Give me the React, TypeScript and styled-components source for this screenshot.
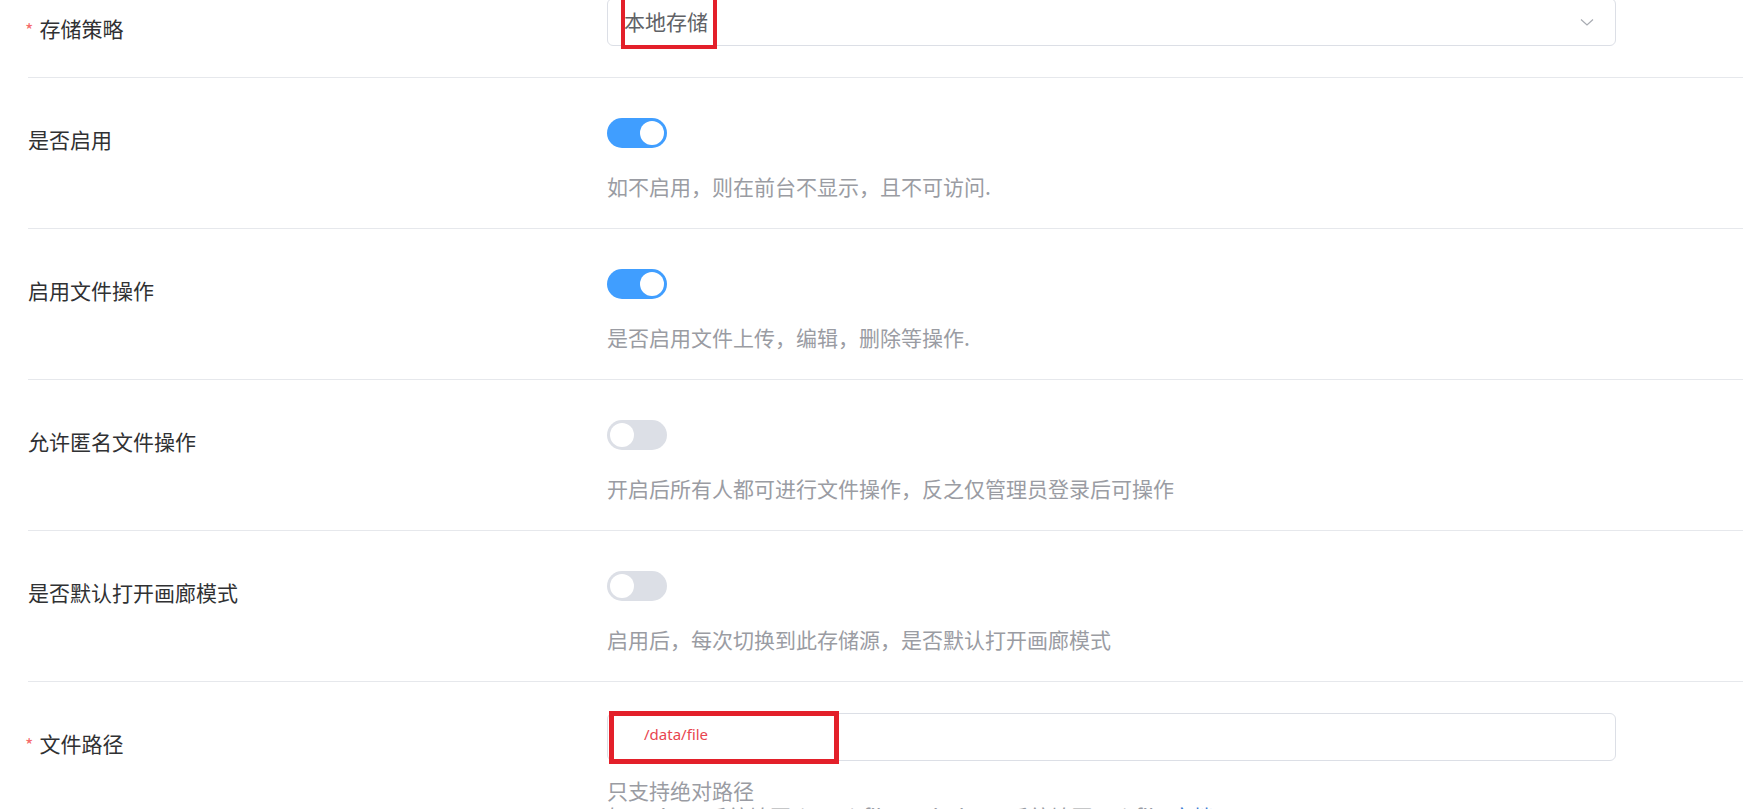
import styled, { createGlobalStyle } from "styled-components";

const GlobalStyle = createGlobalStyle`
  html, body {
    margin: 0;
    padding: 0;
    background: #ffffff;
    overflow: hidden;
  }
  body {
    font-family: "Noto Sans CJK SC", "Noto Sans", sans-serif;
  }
`;

const colors = {
  label: "#303133",
  value: "#606266",
  hint: "#9a9ca3",
  line: "#e6e8ec",
  border: "#dcdfe6",
  blue: "#409eff",
  off: "#dcdfe6",
  star: "#f56c6c",
  mark: "#e3202a",
};

interface RowData {
  label: string;
  hint: string;
  on: boolean;
}

const switchRows: RowData[] = [
  { label: "是否启用", hint: "如不启用，则在前台不显示，且不可访问.", on: true },
  { label: "启用文件操作", hint: "是否启用文件上传，编辑，删除等操作.", on: true },
  {
    label: "允许匿名文件操作",
    hint: "开启后所有人都可进行文件操作，反之仅管理员登录后可操作",
    on: false,
  },
  {
    label: "是否默认打开画廊模式",
    hint: "启用后，每次切换到此存储源，是否默认打开画廊模式",
    on: false,
  },
];

export default function App() {
  return (
    <Page>
      <GlobalStyle />
      <Form>
        <FirstRow>
          <Label $required>存储策略</Label>
          <Field>
            <Select>
              <SelectValue>本地存储</SelectValue>
              <Chevron viewBox="0 0 16 16">
                <path d="M2 5.5 L8 11 L14 5.5" />
              </Chevron>
              <MarkBox $left={13} $top={-4} $width={96} $height={54} $thick={4} />
            </Select>
          </Field>
        </FirstRow>

        {switchRows.map((row) => (
          <Row key={row.label}>
            <Label>{row.label}</Label>
            <Field>
              <SwitchBox>
                <Switch $on={row.on}>
                  <Knob $on={row.on} />
                </Switch>
              </SwitchBox>
              <Hint>{row.hint}</Hint>
            </Field>
          </Row>
        ))}

        <LastRow>
          <Label $required>文件路径</Label>
          <Field>
            <Input>
              <MarkBox $left={1} $top={-3} $width={230} $height={53} $thick={5}>
                <MarkText>/data/file</MarkText>
              </MarkBox>
            </Input>
            <Hint>只支持绝对路径</Hint>
            <Hint>
              如：Linux 系统填写 /root/zfile，Windows 系统填写 D:/zfile
              <HintLink>文档</HintLink>
            </Hint>
          </Field>
        </LastRow>
      </Form>
    </Page>
  );
}

const Page = styled.div`
  width: 1760px;
  height: 809px;
  overflow: hidden;
  background: #fff;
`;

const Form = styled.div`
  margin-top: -2px;
  padding: 0 17px 0 28px;
  display: flex;
  flex-direction: column;
`;

const Row = styled.div`
  display: grid;
  grid-template-columns: 579px 1009px;
  align-items: start;
  padding: 31px 0 29px;
  border-bottom: 1px solid ${colors.line};
`;

const FirstRow = styled(Row)`
  padding: 0 0 31px;
`;

const LastRow = styled(Row)`
  border-bottom: none;
  padding-bottom: 0;
`;

const Label = styled.div<{ $required?: boolean }>`
  font-size: 21px;
  line-height: 60px;
  height: 48px;
  color: ${colors.label};
  white-space: nowrap;

  &::before {
    content: ${(p) => (p.$required ? '"*"' : "none")};
    color: ${colors.star};
    margin-left: -3px;
    margin-right: 6px;
    font-size: 18px;
  }
`;

const Field = styled.div`
  display: flex;
  flex-direction: column;
`;

const Select = styled.div`
  position: relative;
  height: 48px;
  box-sizing: border-box;
  border: 1px solid ${colors.border};
  border-radius: 6px;
  display: flex;
  align-items: center;
  justify-content: space-between;
  padding: 0 20px 0 16px;
`;

const SelectValue = styled.span`
  font-size: 21px;
  color: ${colors.value};
  line-height: 48px;
  margin-top: -3px;
`;

const Chevron = styled.svg`
  width: 16px;
  height: 16px;
  fill: none;
  stroke: #a8abb2;
  stroke-width: 1.2;
`;

const Input = styled.div`
  position: relative;
  height: 48px;
  box-sizing: border-box;
  border: 1px solid ${colors.border};
  border-radius: 6px;
`;

const SwitchBox = styled.div`
  height: 48px;
  display: flex;
  align-items: center;
`;

const Switch = styled.div<{ $on: boolean }>`
  position: relative;
  width: 60px;
  height: 30px;
  border-radius: 15px;
  background: ${(p) => (p.$on ? colors.blue : colors.off)};
`;

const Knob = styled.span<{ $on: boolean }>`
  position: absolute;
  top: 3px;
  left: ${(p) => (p.$on ? "33px" : "3px")};
  width: 24px;
  height: 24px;
  border-radius: 50%;
  background: #fff;
`;

const Hint = styled.div`
  margin-top: 16px;
  font-size: 21px;
  line-height: 26px;
  color: ${colors.hint};
  white-space: nowrap;

  & + & {
    margin-top: 0;
  }
`;

const HintLink = styled.span`
  color: #3a7bd5;
  margin-left: 6px;
`;

const MarkBox = styled.div<{
  $left: number;
  $top: number;
  $width: number;
  $height: number;
  $thick: number;
}>`
  position: absolute;
  left: ${(p) => p.$left}px;
  top: ${(p) => p.$top}px;
  width: ${(p) => p.$width}px;
  height: ${(p) => p.$height}px;
  box-sizing: border-box;
  border: ${(p) => p.$thick}px solid ${colors.mark};
  pointer-events: none;
`;

const MarkText = styled.span`
  position: absolute;
  left: 30px;
  top: 8px;
  font-family: "Noto Sans", sans-serif;
  font-size: 15px;
  line-height: 20px;
  color: #e8454f;
`;
